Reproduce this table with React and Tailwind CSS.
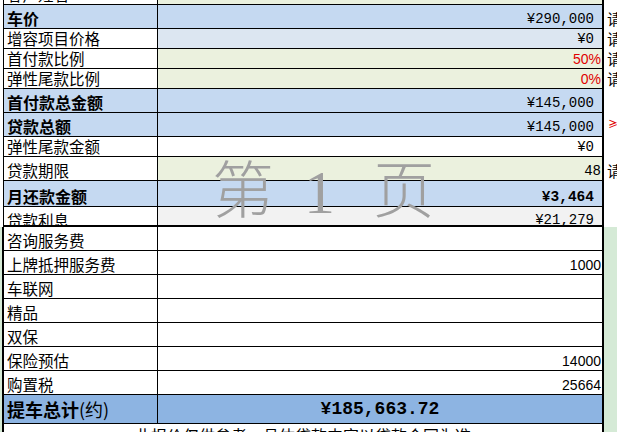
import React from 'react';

const cjk = { fontFamily: '"Noto Sans CJK SC", "Noto Sans", sans-serif' };
const mono = { fontFamily: '"Liberation Mono", "Noto Sans CJK SC", monospace' };

const rows = [
  { label: '客户姓名', h: 20, valueBg: 'bg-[#ebf1de]', top: true },
  { label: '车价', h: 24, bold: true, labelBg: 'bg-[#c5d9f1]', valueBg: 'bg-[#c5d9f1]', value: '¥290,000', note: '请' },
  { label: '增容项目价格', h: 20, valueBg: 'bg-[#dce6f1]', value: '¥0', note: '请' },
  { label: '首付款比例', h: 20, valueBg: 'bg-[#ebf1de]', value: '50%', red: true, tight: true, note: '请' },
  { label: '弹性尾款比例', h: 20, valueBg: 'bg-[#ebf1de]', value: '0%', red: true, tight: true, note: '请' },
  { label: '首付款总金额', h: 24, bold: true, labelBg: 'bg-[#c5d9f1]', valueBg: 'bg-[#c5d9f1]', value: '¥145,000' },
  { label: '贷款总额', h: 24, bold: true, labelBg: 'bg-[#c5d9f1]', valueBg: 'bg-[#c5d9f1]', value: '¥145,000', note: '≥', noteRed: true },
  { label: '弹性尾款金额', h: 20, value: '¥0' },
  { label: '贷款期限', h: 24, valueBg: 'bg-[#ebf1de]', value: '48', tight: true, note: '请' },
  { label: '月还款金额', h: 26, bold: true, labelBg: 'bg-[#c5d9f1]', valueBg: 'bg-[#c5d9f1]', value: '¥3,464', boldValue: true },
  { label: '贷款利息', h: 20, valueBg: 'bg-[#f2f2f2]', value: '¥21,279', thick: true, clip: true },
  { label: '咨询服务费', h: 24, lower: true },
  { label: '上牌抵押服务费', h: 24, lower: true, value: '1000', tight: true, plain: true },
  { label: '车联网', h: 24, lower: true },
  { label: '精品', h: 24, lower: true },
  { label: '双保', h: 24, lower: true },
  { label: '保险预估', h: 24, lower: true, value: '14000', tight: true, plain: true },
  { label: '购置税', h: 24, lower: true, value: '25664', tight: true, plain: true },
];

function Row({ r }) {
  const border = r.thick ? 'border-b-2' : 'border-b';
  return (
    <div className={`flex ${r.top ? 'mt-[-15px]' : ''}`} style={{ height: r.h }}>
      <div className={`w-[4px] shrink-0 ${r.lower ? 'bg-[#d5ead6]' : 'bg-white'} flex justify-end`}>
        <div className={`${r.lower ? 'w-[2px]' : 'w-[1px]'} bg-black`} />
      </div>
      <div
        className={`w-[154px] shrink-0 ${border} border-r border-black ${r.labelBg || 'bg-white'} pl-[3px] flex items-end overflow-hidden whitespace-nowrap`}
        style={cjk}
      >
        <span
          className={`${r.bold ? 'font-bold text-[16px]' : 'text-[15.5px]'} text-black leading-[20px] ${r.clip ? 'translate-y-[5px]' : ''}`}
        >
          {r.label}
        </span>
      </div>
      <div
        className={`flex-1 ${border} border-black ${r.valueBg || 'bg-white'} flex items-end justify-end overflow-hidden whitespace-nowrap ${r.tight ? 'pr-[1px]' : 'pr-[8px]'}`}
      >
        {r.value && (
          <span
            className={`${r.red ? 'text-[#e00000]' : 'text-black'} ${r.boldValue ? 'font-bold' : ''} leading-[20px] ${r.clip ? 'translate-y-[5px]' : 'translate-y-[1px]'}`}
            style={r.red || r.plain ? { fontFamily: '"Liberation Sans", sans-serif', fontSize: 14 } : { ...mono, fontSize: r.boldValue ? 14.5 : 14 }}
          >
            {r.value}
          </span>
        )}
      </div>
      <div className="w-[2px] shrink-0 bg-black" />
      <div
        className={`w-[13px] shrink-0 ${r.lower ? 'bg-[#d5ead6]' : 'bg-white'} ${r.noteRed ? 'pl-[4px]' : 'pl-[3px]'} flex items-end overflow-hidden whitespace-nowrap`}
        style={cjk}
      >
        {r.note && (
          <span className={`leading-[20px] ${r.noteRed ? 'text-[#e00000] text-[10px] font-bold -translate-y-[3px]' : 'text-black text-[15px]'}`}>
            {r.note}
          </span>
        )}
      </div>
    </div>
  );
}

export default function App() {
  return (
    <div className="relative w-[617px] h-[432px] overflow-hidden bg-white">
      <div className="flex flex-col">
        {rows.map((r, i) => (
          <Row key={i} r={r} />
        ))}

        <div className="flex h-[29px]">
          <div className="w-[4px] shrink-0 bg-[#d5ead6] flex justify-end">
            <div className="w-[2px] bg-black" />
          </div>
          <div
            className="w-[154px] shrink-0 border-b border-r border-black bg-[#8db4e2] pl-[3px] flex items-center whitespace-nowrap"
            style={cjk}
          >
            <span className="text-[18px] font-bold leading-[28px] text-black">提车总计</span>
            <span className="text-[18px] leading-[28px] text-black">(约)</span>
          </div>
          <div className="flex-1 border-b border-black bg-[#8db4e2] flex items-center justify-center">
            <span className="text-[18px] font-bold text-black leading-[28px]" style={mono}>
              ¥185,663.72
            </span>
          </div>
          <div className="w-[2px] shrink-0 bg-black" />
          <div className="w-[13px] shrink-0 bg-[#d5ead6]" />
        </div>

        <div className="flex h-[30px]">
          <div className="w-[4px] shrink-0 bg-[#d5ead6] flex justify-end">
            <div className="w-[2px] bg-black" />
          </div>
          <div className="flex-1 bg-white flex justify-center pt-[1px]" style={cjk}>
            <span className="text-[16px] leading-[20px] text-black">此报价仅供参考，具体贷款内容以贷款合同为准</span>
          </div>
          <div className="w-[2px] shrink-0 bg-black" />
          <div className="w-[13px] shrink-0 bg-[#d5ead6]" />
        </div>
      </div>

      <div
        className="pointer-events-none absolute left-[212px] top-[152px] flex items-center text-[62px] leading-[80px] text-[#a0a0a0] whitespace-nowrap"
        style={{ fontFamily: '"Liberation Serif", "Noto Sans CJK SC", serif', fontWeight: 300 }}
      >
        <span>第</span>
        <span className="ml-[30px]">1</span>
        <span className="ml-[38px]">页</span>
      </div>
    </div>
  );
}
